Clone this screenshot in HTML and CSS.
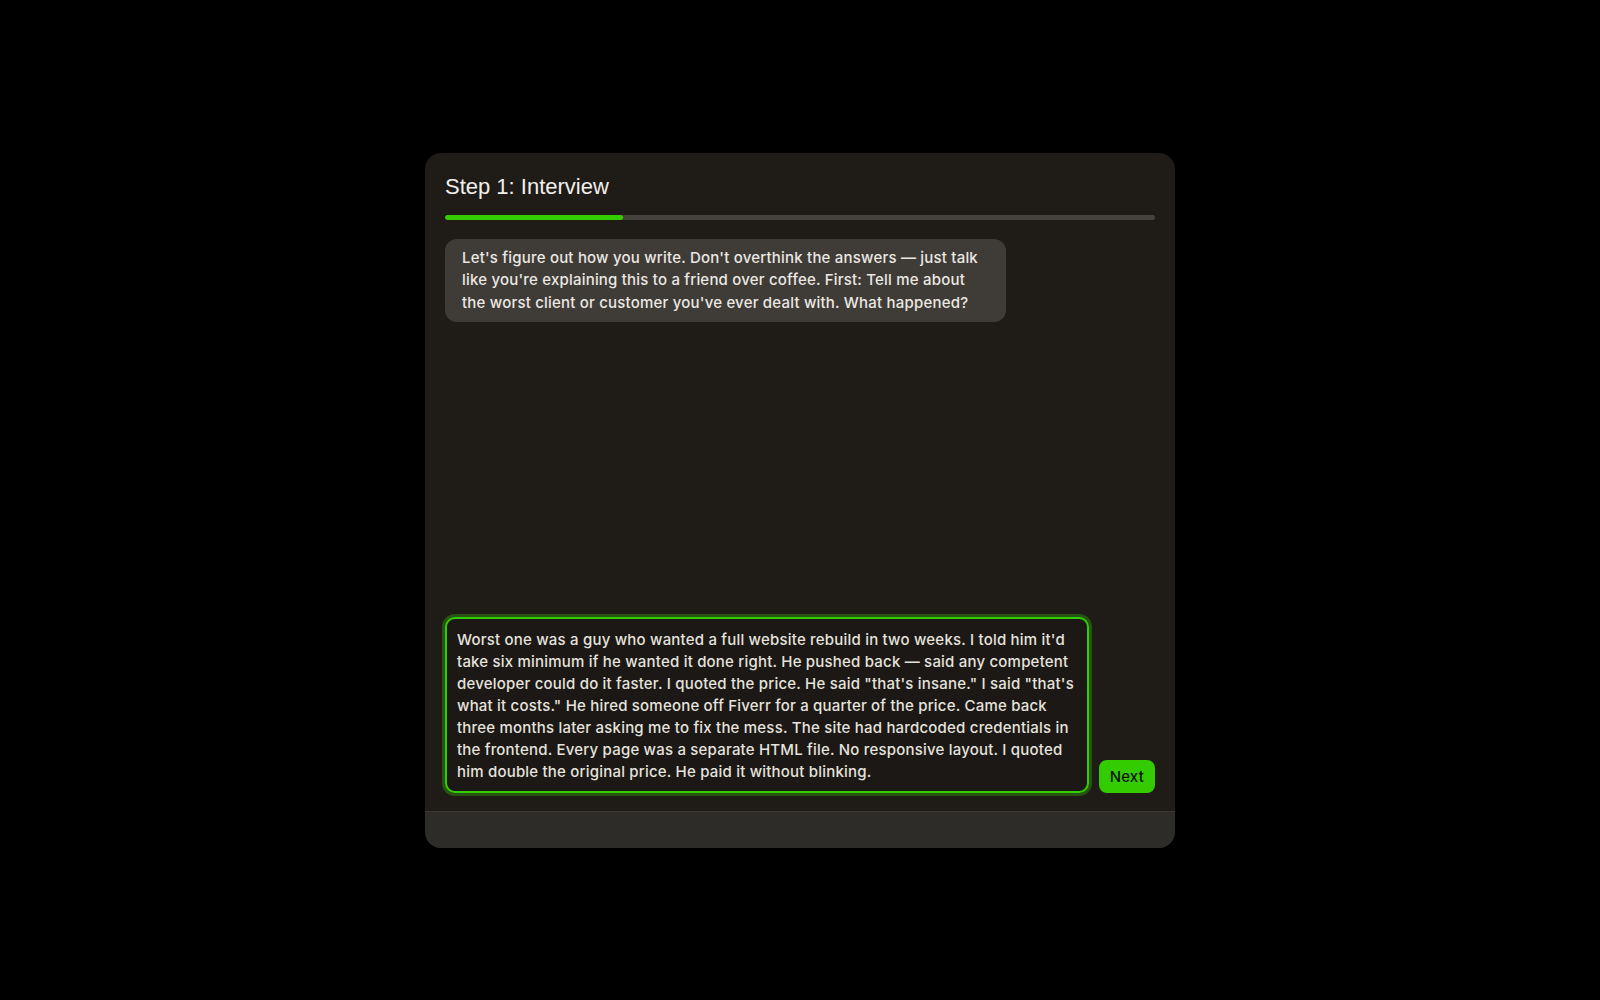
FILE: index.html
```html
<!DOCTYPE html>
<html lang="en">
<head>
<meta charset="utf-8">
<title>Step 1: Interview</title>
<link rel="stylesheet" href="styles.css">
</head>
<body>
<main class="card">
  <header class="card-header">
    <h1 class="title">Step 1: Interview</h1>
    <div class="progress"><div class="progress-fill" style="width:25%"></div></div>
  </header>
  <section class="messages">
    <div class="bubble">Let's figure out how you write. Don't overthink the answers — just talk like you're explaining this to a friend over coffee. First: Tell me about the worst client or customer you've ever dealt with. What happened?</div>
  </section>
  <div class="input-row">
    <textarea class="answer">Worst one was a guy who wanted a full website rebuild in two weeks. I told him it'd take six minimum if he wanted it done right. He pushed back — said any competent developer could do it faster. I quoted the price. He said "that's insane." I said "that's what it costs." He hired someone off Fiverr for a quarter of the price. Came back three months later asking me to fix the mess. The site had hardcoded credentials in the frontend. Every page was a separate HTML file. No responsive layout. I quoted him double the original price. He paid it without blinking.</textarea>
    <button class="next">Next</button>
  </div>
  <footer class="card-footer"></footer>
</main>
</body>
</html>
```

FILE: styles.css
```css
* { box-sizing: border-box; }

html, body {
  margin: 0;
  height: 100%;
}

body {
  background: #000;
  display: flex;
  align-items: center;
  justify-content: center;
  font-family: Inter, "Noto Sans", sans-serif;
  color: #ebe8e3;
}

.card {
  width: 750px;
  height: 695px;
  background: #1f1c18;
  border-radius: 16px;
  display: flex;
  flex-direction: column;
  overflow: hidden;
}

.card-header {
  padding: 21px 20px 0;
}

.title {
  margin: 0;
  font-family: "Liberation Sans", Arial, sans-serif;
  font-weight: normal;
  font-size: 22px;
  line-height: 25px;
  color: #f2f0ec;
}

.progress {
  margin-top: 16px;
  height: 5px;
  border-radius: 3px;
  background: #46433f;
  overflow: hidden;
}

.progress-fill {
  height: 100%;
  background: #33cc00;
  border-radius: 3px;
}

.messages {
  flex: 1;
  padding: 19px 20px 0;
  overflow: auto;
}

.bubble {
  max-width: 79%;
  width: fit-content;
  background: #3f3c37;
  border-radius: 12px;
  padding: 8px 17px;
  font-size: 15px;
  font-weight: 500;
  letter-spacing: 0.2px;
  line-height: 22.5px;
  color: #ebe8e3;
}

.input-row {
  display: flex;
  align-items: flex-end;
  gap: 10px;
  padding: 0 20px 18px;
}

.answer {
  flex: 1;
  height: 176px;
  resize: none;
  background: #1b1815;
  color: #e6e3de;
  border: 2px solid #33cc00;
  border-radius: 10px;
  box-shadow: 0 0 0 3px rgba(51, 204, 0, 0.32);
  padding: 10px 10px 4px;
  font-family: Inter, "Noto Sans", sans-serif;
  font-size: 15px;
  font-weight: 500;
  letter-spacing: 0.2px;
  line-height: 22px;
  outline: none;
  overflow: hidden;
}

.next {
  height: 33px;
  padding: 0 11px;
  background: #33cc00;
  color: #081404;
  border: none;
  border-radius: 8px;
  font-family: Inter, "Noto Sans", sans-serif;
  font-size: 15px;
  font-weight: 500;
  letter-spacing: 0.2px;
  cursor: pointer;
}

.card-footer {
  height: 37px;
  background: #2e2c28;
  border-top: 1px solid #3a3834;
}
```
